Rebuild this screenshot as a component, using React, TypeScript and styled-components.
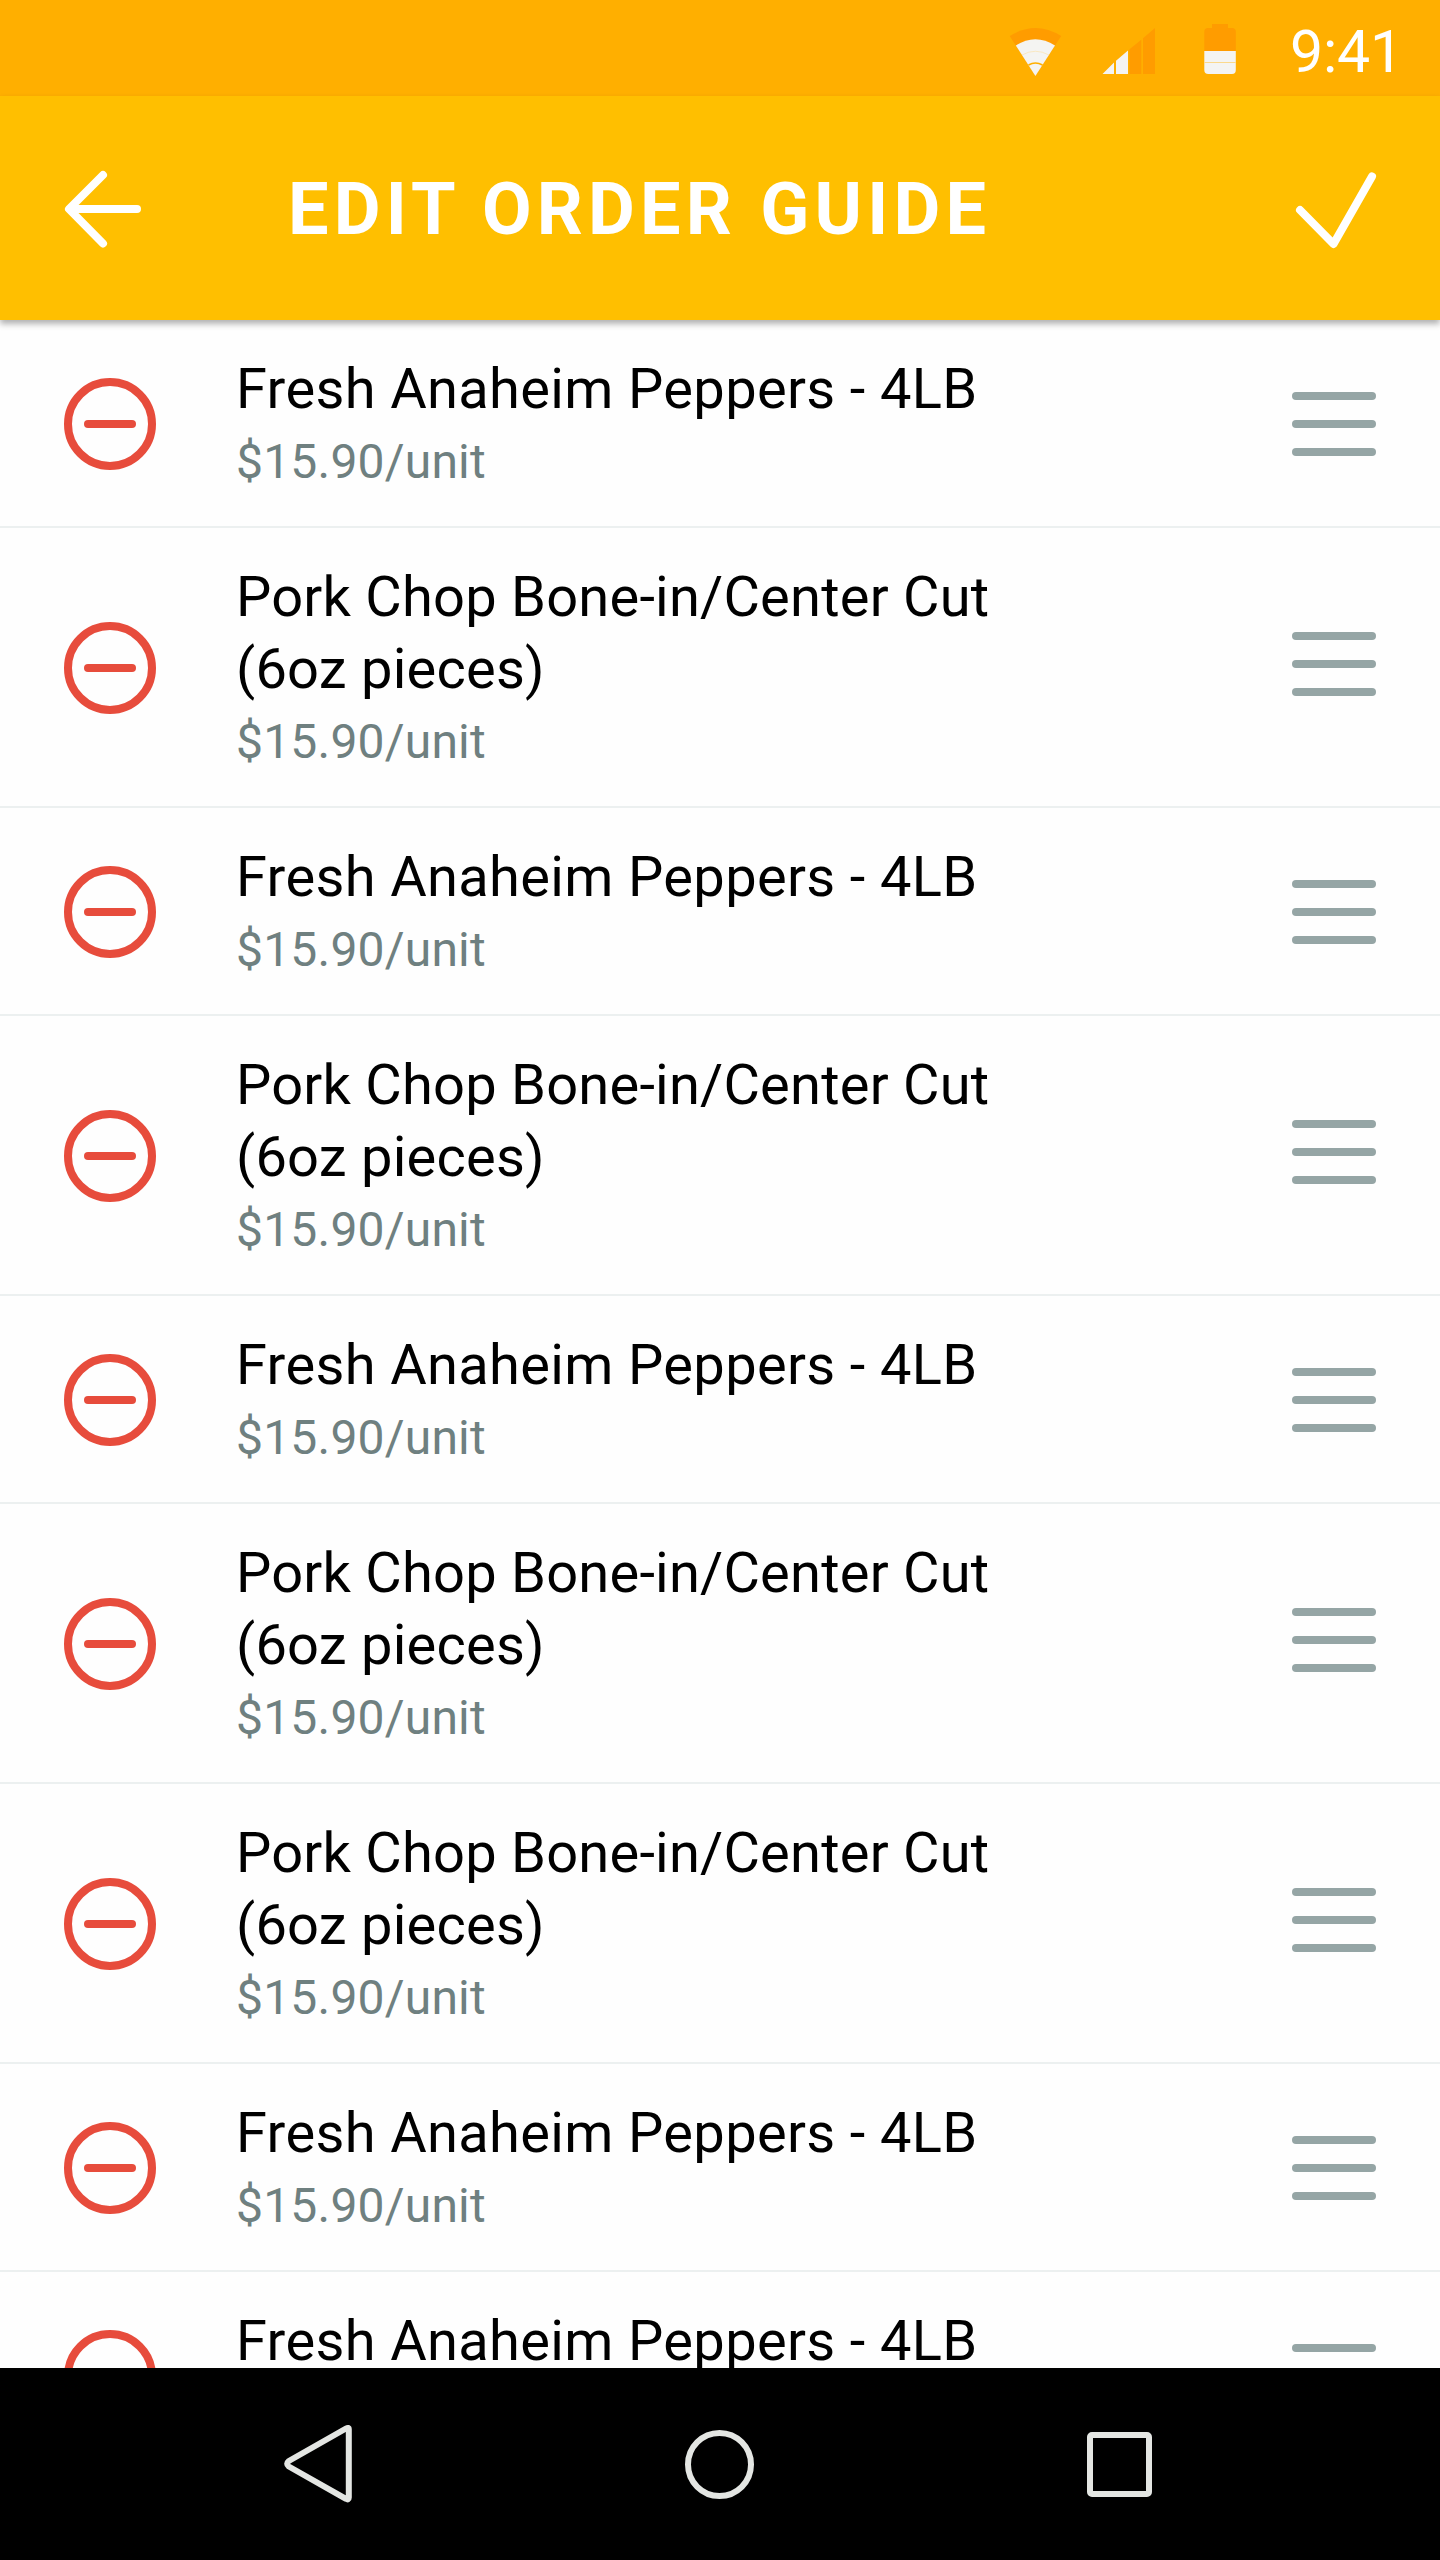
import React from 'react';
import styled, { createGlobalStyle } from 'styled-components';

const GlobalStyle = createGlobalStyle`
  *, *::before, *::after { box-sizing: border-box; }
  body { margin: 0; background: #fff; }
`;

const Screen = styled.div`
  width: 1440px;
  height: 2560px;
  display: flex;
  flex-direction: column;
  overflow: hidden;
  background: #fefefe;
  font-family: Roboto, "Liberation Sans", sans-serif;
`;

const StatusBar = styled.div`
  flex: none;
  height: 96px;
  display: flex;
  align-items: center;
  justify-content: flex-end;
  gap: 50px;
  padding-right: 38px;
  background: #ffaf00;
`;

const StatusIcons = styled.svg`
  flex: none;
  display: block;
  width: 240px;
  height: 96px;
`;

const Clock = styled.time`
  width: 112px;
  padding-top: 7px;
  font-size: 59px;
  line-height: 72px;
  letter-spacing: -0.2px;
  white-space: nowrap;
  color: #fff;
`;

const AppBar = styled.header`
  flex: none;
  z-index: 1;
  height: 224px;
  display: flex;
  align-items: center;
  padding: 0 60px;
  background: #ffbf00;
  box-shadow: 0 4px 6px rgba(0, 0, 0, 0.3);
`;

const Title = styled.h1`
  flex: 1;
  margin: 0;
  padding: 4px 0 0 140px;
  font-size: 72px;
  line-height: 84px;
  font-weight: 700;
  letter-spacing: 5.2px;
  white-space: nowrap;
  color: #fff;
`;

const BarButton = styled.button`
  flex: none;
  display: block;
  width: 88px;
  height: 88px;
  padding: 0;
  border: 0;
  background: none;

  svg {
    display: block;
    fill: none;
    stroke: #fff;
    stroke-width: 8px;
    stroke-linecap: round;
    stroke-linejoin: round;
  }
`;

const List = styled.ul`
  flex: 1;
  min-height: 0;
  margin: 0;
  padding: 0;
  list-style: none;
  overflow: hidden;
`;

const Row = styled.li<{ $tall: boolean }>`
  display: flex;
  align-items: center;
  height: ${(p) => (p.$tall ? 280 : 208)}px;
  padding: 0 64px;
  box-shadow: inset 0 -2px 0 #ecf0f0;
`;

const RemoveButton = styled.button`
  flex: none;
  display: flex;
  align-items: center;
  justify-content: center;
  width: 92px;
  height: 92px;
  padding: 0;
  border: 8px solid #e74c3c;
  border-radius: 50%;
  background: none;

  &::before {
    content: "";
    flex: none;
    width: 52px;
    height: 8px;
    border-radius: 4px;
    background: #e74c3c;
  }
`;

const Details = styled.div`
  flex: 1;
  padding: 3px 0 0 80px;
`;

const Name = styled.div<{ $tight: boolean }>`
  max-width: 800px;
  font-size: 56px;
  line-height: 72px;
  letter-spacing: ${(p) => (p.$tight ? 0.23 : 0.35)}px;
  white-space: pre-line;
  color: #000;
`;

const Price = styled.div`
  margin-top: 1px;
  font-size: 48px;
  line-height: 72px;
  letter-spacing: 0.2px;
  color: #6f8080;
`;

const DragHandle = styled.div<{ $raised: boolean }>`
  flex: none;
  display: flex;
  flex-direction: column;
  gap: 20px;
  width: 84px;
  margin-bottom: ${(p) => (p.$raised ? 8 : 0)}px;
`;

const Grip = styled.span`
  height: 8px;
  border-radius: 4px;
  background: #95a5a5;
`;

const NavBar = styled.nav`
  flex: none;
  height: 192px;
  display: flex;
  align-items: center;
  justify-content: center;
  gap: 310px;
  background: #000;

  svg {
    display: block;
    fill: none;
    stroke: #e4e6e3;
    stroke-width: 6px;
    stroke-linejoin: round;
  }
`;

type Item = { name: string; price: string };

const peppers: Item = { name: 'Fresh Anaheim Peppers - 4LB', price: '$15.90/unit' };
const pork: Item = { name: 'Pork Chop Bone-in/Center Cut\n(6oz pieces)', price: '$15.90/unit' };
const items: Item[] = [peppers, pork, peppers, pork, peppers, pork, pork, peppers, peppers];

function OrderRow({ item }: { item: Item }) {
  const tall = item.name.includes('\n');
  return (
    <Row $tall={tall}>
      <RemoveButton aria-label="Remove" />
      <Details>
        <Name $tight={tall}>{item.name}</Name>
        <Price>{item.price}</Price>
      </Details>
      <DragHandle $raised={tall}>
        <Grip />
        <Grip />
        <Grip />
      </DragHandle>
    </Row>
  );
}

export default function App() {
  return (
    <>
      <GlobalStyle />
      <Screen>
        <StatusBar>
          <StatusIcons viewBox="1000 0 240 96">
            <path d="M1035.4 76 L1009.7 36 Q1035.4 20 1061.2 36 Z" fill="#ff9c00" />
            <path d="M1035.4 76 L1015.8 45.5 Q1035.4 32.8 1055 45.5 Z" fill="#f4f4f2" />
            <path d="M1022 55 Q1035.4 47.5 1049 55" fill="none" stroke="#fbe3ae" strokeWidth="0.7" />
            <path d="M1028.5 65 Q1035.4 60.8 1042.5 65" fill="none" stroke="#ffaf00" strokeWidth="1.5" />
            <path d="M1102.5 74 L1114 62.5 V74 Z M1116 60.7 L1128 50.5 V74 H1116 Z" fill="#f4f4f2" />
            <path d="M1129.5 49.3 L1141.3 39.8 V74 H1129.5 Z M1143 38.3 L1155 28 V74 H1143 Z" fill="#ff9c00" />
            <path d="M1204.3 51 V31.5 Q1204.3 28 1208 28 H1212 V24 H1228 V28 H1232 Q1235.8 28 1235.8 31.5 V51 Z" fill="#ff9c00" />
            <path d="M1204.3 51 H1235.8 V70 Q1235.8 74 1232 74 H1208.3 Q1204.3 74 1204.3 70 Z" fill="#f4f4f2" />
            <path d="M1204.3 62.5 H1235.8" stroke="#fbd98c" strokeWidth="1" />
          </StatusIcons>
          <Clock>9:41</Clock>
        </StatusBar>
        <AppBar>
          <BarButton aria-label="Back">
            <svg width="88" height="88" viewBox="60 164 88 88">
              <path d="M103 175 L69 209 L103 243.5 M70 209 H137" />
            </svg>
          </BarButton>
          <Title>EDIT ORDER GUIDE</Title>
          <BarButton aria-label="Done">
            <svg width="88" height="88" viewBox="1292 164 88 88">
              <path d="M1300 210 L1333.5 244 L1372 176.5" />
            </svg>
          </BarButton>
        </AppBar>
        <List>
          {items.map((item, i) => (
            <OrderRow key={i} item={item} />
          ))}
        </List>
        <NavBar>
          <svg width="90" height="90" viewBox="275 2419 90 90">
            <path d="M348.8 2429.5 V2497.5 Q348.8 2500.5 346 2498.8 L288.8 2466.5 Q285.5 2463.7 288.8 2461 L346 2428.5 Q348.8 2426.9 348.8 2429.5 Z" />
          </svg>
          <svg width="90" height="90" viewBox="675 2419 90 90">
            <circle cx="719.5" cy="2464.5" r="31.5" />
          </svg>
          <svg width="90" height="90" viewBox="1075 2419 90 90">
            <rect x="1090" y="2435" width="59" height="59" rx="2" />
          </svg>
        </NavBar>
      </Screen>
    </>
  );
}
